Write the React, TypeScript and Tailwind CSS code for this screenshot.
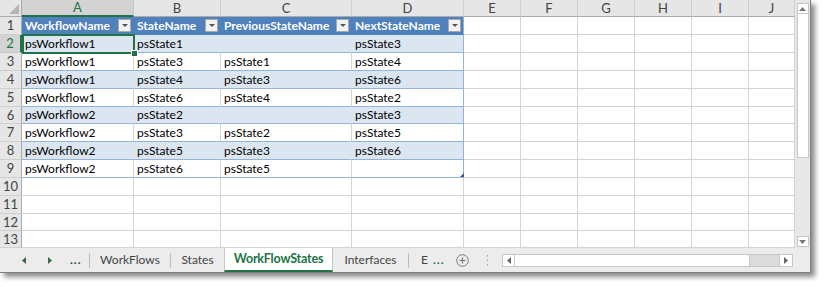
import React from 'react';

const letters = ['A', 'B', 'C', 'D', 'E', 'F', 'G', 'H', 'I', 'J'];
const header = ['WorkflowName', 'StateName', 'PreviousStateName', 'NextStateName'];
const data = [
  ['psWorkflow1', 'psState1', '', 'psState3'],
  ['psWorkflow1', 'psState3', 'psState1', 'psState4'],
  ['psWorkflow1', 'psState4', 'psState3', 'psState6'],
  ['psWorkflow1', 'psState6', 'psState4', 'psState2'],
  ['psWorkflow2', 'psState2', '', 'psState3'],
  ['psWorkflow2', 'psState3', 'psState2', 'psState5'],
  ['psWorkflow2', 'psState5', 'psState3', 'psState6'],
  ['psWorkflow2', 'psState6', 'psState5', ''],
];

function FilterButton() {
  return (
    <span className="w-[13px] h-[13px] shrink-0 border border-[#a9a9a9] bg-[#f2f2f2] flex items-center justify-center">
      <span className="w-0 h-0 border-l-[3px] border-r-[3px] border-t-[3px] border-l-transparent border-r-transparent border-t-[#555]" />
    </span>
  );
}

function Cell({ r, c }: { r: number; c: number }) {
  if (r === 1 && c < 4) {
    return (
      <div
        className={
          c === 3
            ? 'bg-[#4f81bd] text-white font-bold border-r border-b border-r-[#95b3d7] border-b-[#4f81bd] flex items-center justify-between pl-[3px] pr-[2px] overflow-hidden whitespace-nowrap'
            : 'bg-[#4f81bd] text-white font-bold border-r border-b border-r-[#4f81bd] border-b-[#4f81bd] flex items-center justify-between pl-[3px] pr-[2px] overflow-hidden whitespace-nowrap'
        }
      >
        <span>{header[c]}</span>
        <FilterButton />
      </div>
    );
  }
  if (r >= 2 && r <= 9 && c < 4) {
    const banded = r % 2 === 0;
    const text = data[r - 2][c];
    let cls = '';
    if (banded) {
      cls =
        c === 3
          ? 'bg-[#dce6f1] border-r border-b border-r-[#95b3d7] border-b-[#95b3d7]'
          : 'bg-[#dce6f1] border-r border-b border-r-[#dce6f1] border-b-[#95b3d7]';
    } else {
      cls =
        c === 3
          ? 'bg-white border-r border-b border-r-[#95b3d7] border-b-[#95b3d7]'
          : 'bg-white border-r border-b border-r-[#d4d4d4] border-b-[#95b3d7]';
    }
    return (
      <div className={cls + ' flex items-center pl-[3px] text-black overflow-hidden whitespace-nowrap'}>
        {text}
      </div>
    );
  }
  return <div className="bg-white border-r border-b border-r-[#d4d4d4] border-b-[#d4d4d4]" />;
}

function RowHeader({ r }: { r: number }) {
  return (
    <div
      className={
        r === 2
          ? 'bg-[#d3d3d3] text-[#217346] text-[13px] border-r-2 border-b border-r-[#217346] border-b-[#c6c6c6] flex items-center justify-center'
          : 'bg-[#e6e6e6] text-[#444] text-[13px] border-r border-b border-r-[#ababab] border-b-[#cfcfcf] flex items-center justify-center'
      }
    >
      {r}
    </div>
  );
}

function ColHeader({ c }: { c: number }) {
  return (
    <div
      className={
        c === 0
          ? 'bg-[#d3d3d3] text-[#217346] text-[13px] border-r border-b-2 border-r-[#c6c6c6] border-b-[#217346] flex items-center justify-center'
          : 'bg-[#e6e6e6] text-[#444] text-[13px] border-r border-b border-r-[#cfcfcf] border-b-[#ababab] flex items-center justify-center'
      }
    >
      {letters[c]}
    </div>
  );
}

function Tri({ dir, color }: { dir: 'left' | 'right' | 'up' | 'down'; color: string }) {
  const pts =
    dir === 'left'
      ? '4,0 4,7 0,3.5'
      : dir === 'right'
      ? '0,0 0,7 4,3.5'
      : dir === 'up'
      ? '0,4 7,4 3.5,0'
      : '0,0 7,0 3.5,4';
  const w = dir === 'left' || dir === 'right' ? 4 : 7;
  const h = dir === 'left' || dir === 'right' ? 7 : 4;
  return (
    <svg width={w} height={h} viewBox={`0 0 ${w} ${h}`}>
      <polygon points={pts} fill={color} />
    </svg>
  );
}

export default function App() {
  const rows = Array.from({ length: 13 }, (_, i) => i + 1);
  return (
    <div className="w-[825px] h-[287px] bg-white font-['Lato','Liberation_Sans',sans-serif] text-[12px] leading-none">
      <div className="w-[811px] h-[273px] flex flex-col border-r border-b border-[#7f7f7f] shadow-[4px_4px_5px_rgba(0,0,0,0.45)] bg-white">
        <div className="flex h-[248px]">
          <div className="relative w-[795px] h-[248px] grid grid-cols-[22px_112px_87px_131px_112px_57px_57px_57px_57px_57px_46px] grid-rows-[17px_18px_18px_18px_18px_18px_17px_18px_18px_18px_18px_18px_17px_17px]">
            <div className="bg-[#e6e6e6] border-r border-b border-r-[#ababab] border-b-[#ababab] flex items-end justify-end pr-[2px] pb-[2px]">
              <svg width="10" height="10" viewBox="0 0 10 10">
                <polygon points="10,0 10,10 0,10" fill="#b5b5b5" />
              </svg>
            </div>
            {letters.map((_, c) => (
              <ColHeader key={'h' + c} c={c} />
            ))}
            {rows.map((r) => (
              <React.Fragment key={'r' + r}>
                <RowHeader r={r} />
                {letters.map((_, c) => (
                  <Cell key={r + '-' + c} r={r} c={c} />
                ))}
              </React.Fragment>
            ))}
            <div className="absolute left-[22px] top-[34px] w-[113px] h-[20px] border-2 border-[#217346]">
              <div className="absolute left-[107px] top-[14px] w-[7px] h-[7px] bg-[#217346] border border-white" />
            </div>
            <svg className="absolute left-[460px] top-[173px]" width="4" height="4" viewBox="0 0 4 4">
              <polygon points="4,0 4,4 0,4" fill="#2f5597" />
            </svg>
          </div>
          <div className="w-[15px] h-[248px] bg-[#e8e8e8] flex flex-col items-center pt-[3px] pb-[1px]">
            <div className="w-[12px] h-[11px] bg-white border border-[#c6c6c6] flex items-center justify-center">
              <Tri dir="up" color="#777" />
            </div>
            <div className="w-[12px] h-[144px] bg-white border border-[#c6c6c6] border-t-0" />
            <div className="flex-1" />
            <div className="w-[12px] h-[11px] bg-white border border-[#c6c6c6] flex items-center justify-center">
              <Tri dir="down" color="#777" />
            </div>
          </div>
        </div>
        <div className="flex items-center h-[24px] bg-[#ececec] text-[#444]">
          <div className="w-[89px] flex items-center">
            <span className="ml-[22px] flex">
              <Tri dir="left" color="#2e6b45" />
            </span>
            <span className="ml-[22px] flex">
              <Tri dir="right" color="#2e6b45" />
            </span>
            <span className="ml-[18px] text-[#1f5136] font-bold tracking-[1px]">...</span>
          </div>
          <div className="w-px h-[15px] bg-[#bdbdbd]" />
          <div className="w-[80px] flex items-center justify-center">WorkFlows</div>
          <div className="w-px h-[15px] bg-[#bdbdbd]" />
          <div className="w-[53px] flex items-center justify-center">States</div>
          <div className="w-[109px] h-[24px] bg-white border-l border-r border-b-2 border-l-[#c6c6c6] border-r-[#c6c6c6] border-b-[#217346] flex items-center justify-center font-bold text-[#217346] text-[12.5px] tracking-[-0.2px]">
            WorkFlowStates
          </div>
          <div className="w-[75px] flex items-center justify-center">Interfaces</div>
          <div className="w-px h-[15px] bg-[#bdbdbd]" />
          <div className="w-[40px] flex items-center pl-[12px]">
            <span>E</span>
            <span className="ml-[5px] text-[#217346] font-bold tracking-[1px]">...</span>
          </div>
          <div className="w-[27px] flex items-center pl-[7px]">
            <svg width="13" height="13" viewBox="0 0 13 13">
              <circle cx="6.5" cy="6.5" r="5.8" fill="none" stroke="#7a7a7a" strokeWidth="1" />
              <line x1="6.5" y1="3.5" x2="6.5" y2="9.5" stroke="#7a7a7a" strokeWidth="1.2" />
              <line x1="3.5" y1="6.5" x2="9.5" y2="6.5" stroke="#7a7a7a" strokeWidth="1.2" />
            </svg>
          </div>
          <div className="w-[26px] flex items-center pl-[11px]">
            <svg width="2" height="11" viewBox="0 0 2 11">
              <rect x="0" y="0" width="1" height="1.5" fill="#a0a0a0" />
              <rect x="0" y="4.5" width="1" height="1.5" fill="#a0a0a0" />
              <rect x="0" y="9" width="1" height="1.5" fill="#a0a0a0" />
            </svg>
          </div>
          <div className="w-[291px] h-[13px] flex bg-[#dcdcdc] border border-[#c6c6c6]">
            <div className="w-[12px] h-full bg-white border-r border-[#c6c6c6] flex items-center justify-center">
              <Tri dir="left" color="#666" />
            </div>
            <div className="w-[235px] h-full bg-white border-r border-[#c6c6c6]" />
            <div className="flex-1" />
            <div className="w-[13px] h-full bg-white border-l border-[#c6c6c6] flex items-center justify-center">
              <Tri dir="right" color="#666" />
            </div>
          </div>
        </div>
      </div>
    </div>
  );
}
